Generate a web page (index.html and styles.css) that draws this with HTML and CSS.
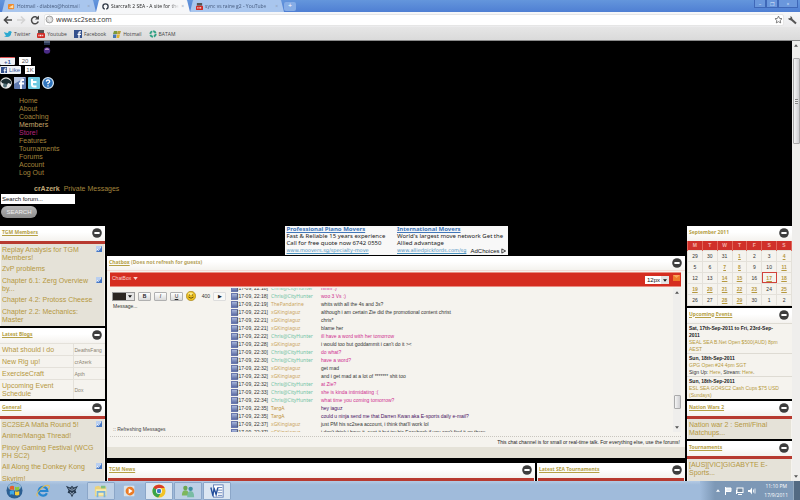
FILE: index.html
```html
<!DOCTYPE html>
<html lang="en">
<head>
<meta charset="utf-8">
<title>Starcraft 2 SEA - A site for the community</title>
<link rel="stylesheet" href="styles.css">
</head>
<body>
<svg class="defs" aria-hidden="true">
  <symbol id="minus" viewBox="0 0 10 10"><circle cx="5" cy="5" r="4.8" fill="#3d3d3d"/><rect x="2.4" y="4" width="5.2" height="2" fill="#fff"/></symbol>
  <symbol id="ext" viewBox="0 0 6 6"><rect width="6" height="6" fill="#b9cff0"/><path d="M0 6L6 0V6z" fill="#4677c4"/><path d="M1 3l1.5 1.5L5 1" stroke="#fff" stroke-width=".8" fill="none"/></symbol>
  <symbol id="yt" viewBox="0 0 8 8"><rect x="1" y="0" width="6" height="3" fill="#555"/><rect x="0" y="3" width="8" height="5" rx="1" fill="#cf2b25"/><path d="M1.5 5.5h5" stroke="#fff" stroke-width="1.4" stroke-dasharray="1 .6"/></symbol>
  <symbol id="fb" viewBox="0 0 8 8"><rect width="8" height="8" fill="#34508c"/><path d="M7 1.8H5.8Q5 1.8 5 2.8V8M3.5 4.3H7" stroke="#fff" stroke-width="1.3" fill="none"/></symbol>
  <symbol id="bird" viewBox="0 0 8 8"><path d="M0 2q2 1 4 1q0-2 2-2q1 0 1.3.8L8 2l-.8 1Q7 7 3 7Q1 7 0 6q1.500 0 2-.6Q.6 4.500 0 2z" fill="#2ba9d0"/></symbol>
  <symbol id="caret" viewBox="0 0 6 4"><path d="M0 0h6L3 4z" fill="currentColor"/></symbol>
</svg>

<div class="tabs">
  <div class="tab"><svg viewBox="0 0 8 8"><rect x="0" y="1" width="7" height="6" rx="1" fill="#ef8a2c"/><path d="M1 5l5-3v4z" fill="#ffe0a8"/></svg><span>Hotmail - diabteo@hotmail</span><i>×</i></div>
  <div class="tab active"><svg viewBox="0 0 8 8"><circle cx="4" cy="4" r="3" fill="none" stroke="#333b48" stroke-width="1.500"/><path d="M4 4v4" stroke="#fff" stroke-width="1.500"/></svg><span>Starcraft 2 SEA - A site for the</span><i>×</i></div>
  <div class="tab"><svg><use href="#yt"/></svg><span>sync vs raine g2 - YouTube</span><i>×</i></div>
  <button class="newtab" aria-label="New tab">+</button>
  <div class="winbtns"><button aria-label="Minimize">–</button><button aria-label="Restore">❐</button><button class="wide" aria-label="Close">×</button></div>
</div>
<div class="toolbar">
  <svg viewBox="0 0 10 10"><path d="M9 5H2M5 1.500L1.500 5L5 8.500" stroke="#4a4a4a" stroke-width="1.600" fill="none"/></svg>
  <svg viewBox="0 0 10 10"><path d="M1 5h7M5 1.500L8.500 5L5 8.500" stroke="#d4d4d4" stroke-width="1.600" fill="none"/></svg>
  <svg viewBox="0 0 10 10"><path d="M8 3.500A3.500 3.500 0 1 0 8.300 6.500" stroke="#4a4a4a" stroke-width="1.500" fill="none"/><path d="M9 .5V4.500H5z" fill="#4a4a4a"/></svg>
  <div class="omnibox">
    <svg viewBox="0 0 10 10"><circle cx="5" cy="5" r="3.800" fill="#ddd" stroke="#999"/><path d="M3 3l2 1 1 3" stroke="#fff" fill="none"/></svg>
    <input type="text" value="www.sc2sea.com" aria-label="Address">
    <svg viewBox="0 0 10 10"><path d="M5 1.200l1.200 2.600 2.700.300-2 1.900.500 2.800L5 7.400 2.600 8.800l.500-2.800-2-1.900 2.700-.300z" stroke="#666" fill="none" stroke-width=".9"/></svg>
  </div>
  <svg viewBox="0 0 10 10"><path d="M4 4l5 4.500" stroke="#555" stroke-width="2"/><path d="M1 3.500Q2 6 5 5Q6 2 3.500 1v2z" fill="#555"/></svg>
</div>
<div class="bookmarks">
  <a href="#"><svg><use href="#bird"/></svg>Twitter</a>
  <a href="#"><svg><use href="#yt"/></svg>Youtube</a>
  <a href="#"><svg><use href="#fb"/></svg>Facebook</a>
  <a href="#"><svg viewBox="0 0 8 8"><path d="M1 1h3v3H0z" fill="#7d9a3c"/><path d="M4.500 1H8L7 4H4z" fill="#b7a23a"/><path d="M0 4.500h3.500L3 8H0z" fill="#4577b5"/><path d="M4 4.500h3L6 8H3.500z" fill="#e3b52f"/></svg>Hotmail</a>
  <a href="#"><svg viewBox="0 0 8 8"><circle cx="4" cy="4" r="2.700" fill="none" stroke="#2fa082" stroke-width="2" stroke-dasharray="3.300 .9"/></svg>BATAM</a>
</div>

<div class="viewport">
<main class="page">
  <header class="top">
    <div class="flags"><svg viewBox="0 0 8 13"><rect x="1" width="6" height="4" fill="#26324f"/><path d="M1 1h6" stroke="#7887a0"/><circle cx="4" cy="9.500" r="3.200" fill="#4a2b86"/><path d="M2 8q2-2 4 0v1H2z" fill="#b48ac2"/></svg></div>
    <div class="social"><button class="plus">+1</button><span class="bubble">20</span></div>
    <div class="social"><button class="like"><svg><use href="#fb"/></svg>Like</button><span class="bubble small">1K</span></div>
    <div class="links">
      <a href="#" aria-label="Steam"><svg viewBox="0 0 12 12"><circle cx="6" cy="6" r="5.800" fill="#e8e8e8"/><path d="M1 4q5-5 10 0v3l-3-1-1 2-5-2z" fill="#1c2e33"/><circle cx="5" cy="8.500" r="2" fill="#527078"/></svg></a>
      <a href="#" aria-label="Facebook"><svg viewBox="0 0 12 12"><rect width="12" height="12" rx="1" fill="#5f7ab0"/><path d="M0 0h12L0 7z" fill="#b6c4e0"/><path d="M10 3H8.500Q7 3 7 4.500V12M5 6.500h5" stroke="#fff" stroke-width="1.800" fill="none"/></svg></a>
      <a href="#" aria-label="Twitter"><svg viewBox="0 0 12 12"><rect width="12" height="12" rx="1" fill="#6fcbe2"/><path d="M4 2v5.500Q4 9.500 6 9.500H8.500M4 5h4.500" stroke="#fff" stroke-width="2" fill="none"/></svg></a>
      <a href="#" aria-label="Help"><svg viewBox="0 0 12 12"><circle cx="6" cy="6" r="5.400" fill="#2f74bd" stroke="#dcebf8" stroke-width="1.200"/><path d="M4.200 4.500Q4.500 3 6 3t1.700 1.500Q7.600 5.500 6 6.300V7.200M6 8.200v1.200" stroke="#fff" stroke-width="1.300" fill="none"/></svg></a>
    </div>
    <nav class="nav">
      <a href="#">Home</a><a href="#">About</a><a href="#">Coaching</a><a href="#" class="light">Members</a><a href="#" class="hot">Store!</a><a href="#">Features</a><a href="#">Tournaments</a><a href="#">Forums</a><a href="#">Account</a><a href="#">Log Out</a>
    </nav>
    <div class="user"><a href="#"><b>crAzerk</b></a><a href="#">Private Messages</a></div>
    <form class="search"><input type="text" value="Search forum..." aria-label="Search forum"><button type="button">SEARCH</button></form>
  </header>

  <div class="columns">
    <aside class="col">
      <section class="panel">
        <div class="head"><a href="#">TGM Members</a><svg><use href="#minus"/></svg></div>
        <ul class="list">
          <li><a href="#">Replay Analysis for TGM Members!</a><svg><use href="#ext"/></svg></li>
          <li><a href="#">ZvP problems</a></li>
          <li><a href="#">Chapter 6.1: Zerg Overview by...</a><svg><use href="#ext"/></svg></li>
          <li><a href="#">Chapter 4.2: Protoss Cheese</a></li>
          <li><a href="#">Chapter 2.2: Mechanics: Master</a></li>
        </ul>
      </section>
      <section class="panel">
        <div class="head"><a href="#">Latest Blogs</a><svg><use href="#minus"/></svg></div>
        <table class="blogs">
          <tr><td><a href="#">What should i do</a></td><td>DeathsFang</td></tr>
          <tr><td><a href="#">New Rig up!</a></td><td>crAzerk</td></tr>
          <tr><td><a href="#">ExerciseCraft</a></td><td>Apth</td></tr>
          <tr><td><a href="#">Upcoming Event Schedule</a></td><td>Dox</td></tr>
        </table>
      </section>
      <section class="panel">
        <div class="head"><a href="#">General</a><svg><use href="#minus"/></svg></div>
        <ul class="list">
          <li><a href="#">SC2SEA Mafia Round 5!</a><svg><use href="#ext"/></svg></li>
          <li><a href="#">Anime/Manga Thread!</a></li>
          <li><a href="#">Pinoy Gaming Festival (WCG PH SC2)</a></li>
          <li><a href="#">All Along the Donkey Kong</a><svg><use href="#ext"/></svg></li>
          <li><a href="#">Skyrim!</a></li>
        </ul>
      </section>
    </aside>

    <div class="center">
      <div class="ad">
        <div><a href="#" class="adtitle">Professional Piano Movers</a><p>Fast &amp; Reliable 15 years experience</p><p>Call for free quote now 6742 0550</p><a href="#" class="url">www.moovers.sg/specialty-move</a></div>
        <div><a href="#" class="adtitle">International Movers</a><p>World's largest move network Get the</p><p>Allied advantage</p><a href="#" class="url">www.alliedpickfords.com/sg</a></div>
        <span class="choices">AdChoices <svg viewBox="0 0 6 6"><path d="M1 .5L5.500 3L1 5.500z" fill="none" stroke="#222"/></svg></span>
      </div>
      <section class="chat">
        <div class="head"><span><a href="#">Chatbox</a> (Does not refresh for guests)</span><svg><use href="#minus"/></svg></div>
        <div class="redbar">
          <span>ChatBox <svg><use href="#caret"/></svg></span>
          <div class="size"><select aria-label="Font size"><option>12px</option></select><svg class="pick"><use href="#caret"/></svg><svg class="env" viewBox="0 0 7 7"><rect width="7" height="6" fill="#ef7a2a"/><path d="M0 0l3.500 3L7 0" fill="#f9a55c"/></svg></div>
        </div>
        <div class="chatbody">
          <div class="composer">
            <div class="tools">
              <span class="colour"><select aria-label="Colour"><option></option></select><svg><use href="#caret"/></svg></span>
              <button><b>B</b></button><button><i>I</i></button><button><u>U</u></button>
              <svg class="smile" viewBox="0 0 10 10"><circle cx="5" cy="5" r="4.700" fill="#e9bd21" stroke="#9d7b14" stroke-width=".6"/><ellipse cx="4.500" cy="2.800" rx="2.500" ry="1.300" fill="#fbe98a"/><path d="M2.500 6q2.500 2.500 5 0M3.500 3.500v1M6.500 3.500v1" stroke="#4c3a05" fill="none" stroke-width=".8"/></svg>
              <span class="count">400</span><button class="send" aria-label="Send">▶</button>
            </div>
            <textarea aria-label="Message">Message...</textarea>
            <div class="status">:: Refreshing Messages</div>
          </div>
          <ol class="log">
            <li class="c"><time>[17-09, 22:18]</time><b>Chris@CityHunter</b><span>hmm :)</span></li>
            <li class="c"><time>[17-09, 22:18]</time><b>Chris@CityHunter</b><span>woo 3 Vs :)</span></li>
            <li><time>[17-09, 22:19]</time><b>ThePandarine</b><span>whits with all the 4s and 3s?</span></li>
            <li><time>[17-09, 22:21]</time><b>xGKingiaguz</b><span>although i am certain Zie did the promotional content christ</span></li>
            <li><time>[17-09, 22:21]</time><b>xGKingiaguz</b><span>chris*</span></li>
            <li><time>[17-09, 22:21]</time><b>xGKingiaguz</b><span>blame her</span></li>
            <li class="c"><time>[17-09, 22:22]</time><b>Chris@CityHunter</b><span>ill have a word with her tomorrow</span></li>
            <li><time>[17-09, 22:28]</time><b>xGKingiaguz</b><span>i would too but goddammit i can't do it &gt;&lt;</span></li>
            <li class="c"><time>[17-09, 22:30]</time><b>Chris@CityHunter</b><span>do what?</span></li>
            <li class="c"><time>[17-09, 22:30]</time><b>Chris@CityHunter</b><span>have a word?</span></li>
            <li><time>[17-09, 22:32]</time><b>xGKingiaguz</b><span>get mad</span></li>
            <li><time>[17-09, 22:32]</time><b>xGKingiaguz</b><span>and i get mad at a lot of ******* shit too</span></li>
            <li class="c"><time>[17-09, 22:32]</time><b>Chris@CityHunter</b><span>at Zie?</span></li>
            <li class="c"><time>[17-09, 22:33]</time><b>Chris@CityHunter</b><span>she is kinda intimidating :(</span></li>
            <li class="c"><time>[17-09, 22:34]</time><b>Chris@CityHunter</b><span>what time you coming tomorrow?</span></li>
            <li class="p"><time>[17-09, 22:35]</time><b>TargA</b><span>hey iaguz</span></li>
            <li class="p"><time>[17-09, 22:35]</time><b>TargA</b><span>could u ninja send me that Darren Kwan aka E-sports daily e-mail?</span></li>
            <li><time>[17-09, 22:37]</time><b>xGKingiaguz</b><span>just PM his sc2sea account, i think that'll work lol</span></li>
            <li><time>[17-09, 22:37]</time><b>xGKingiaguz</b><span>i don't think i have it, sent it but try his Facebook if you can't find it on there</span></li>
          </ol>
          <div class="scroll inner"><svg class="up"><use href="#caret"/></svg><span class="thumb"></span><svg><use href="#caret"/></svg></div>
        </div>
        <p class="note">This chat channel is for small or real-time talk. For everything else, use the forums!</p>
      </section>
      <div class="pair">
        <section class="panel"><div class="head"><a href="#">TGM News</a><svg><use href="#minus"/></svg></div><div class="rule"></div></section>
        <section class="panel"><div class="head"><a href="#">Latest SEA Tournaments</a><svg><use href="#minus"/></svg></div><div class="rule"></div></section>
      </div>
    </div>

    <aside class="col">
      <section class="panel">
        <div class="head plain"><a href="#">September 2011</a><svg><use href="#minus"/></svg></div>
        <table class="cal">
          <tr><th>M</th><th>T</th><th>W</th><th>T</th><th>F</th><th>S</th><th>S</th></tr>
          <tr><td>29</td><td>30</td><td>31</td><td><a href="#">1</a></td><td>2</td><td>3</td><td><a href="#">4</a></td></tr>
          <tr><td>5</td><td>6</td><td><a href="#">7</a></td><td><a href="#">8</a></td><td>9</td><td>10</td><td><a href="#">11</a></td></tr>
          <tr><td>12</td><td>13</td><td><a href="#">14</a></td><td><a href="#">15</a></td><td>16</td><td class="today"><a href="#">17</a></td><td><a href="#">18</a></td></tr>
          <tr><td><a href="#">19</a></td><td><a href="#">20</a></td><td><a href="#">21</a></td><td><a href="#">22</a></td><td><a href="#">23</a></td><td>24</td><td><a href="#">25</a></td></tr>
          <tr><td>26</td><td>27</td><td><a href="#">28</a></td><td><a href="#">29</a></td><td>30</td><td>1</td><td>2</td></tr>
        </table>
      </section>
      <section class="panel">
        <div class="head"><a href="#">Upcoming Events</a><svg><use href="#minus"/></svg></div>
        <ul class="events">
          <li><b>Sat, 17th-Sep-2011 to Fri, 23rd-Sep-<br>2011</b><a href="#">SEAL SEA B.Net Open $500(AUD) 8pm AEST</a></li>
          <li><b>Sun, 18th-Sep-2011</b><a href="#">GPG Open #24 4pm SGT</a><span>Sign Up: <em>Here</em>, Stream: <em>Here</em>.</span></li>
          <li><b>Sun, 18th-Sep-2011</b><a href="#">ESL SEA GO4SC2 Cash Cups $75 USD (Sundays)</a></li>
        </ul>
      </section>
      <section class="panel">
        <div class="head"><a href="#">Nation Wars 2</a><svg><use href="#minus"/></svg></div>
        <ul class="list"><li><a href="#">Nation war 2 : Semi/Final Matchups...</a></li></ul>
      </section>
      <section class="panel">
        <div class="head"><a href="#">Tournaments</a><svg><use href="#minus"/></svg></div>
        <ul class="list last"><li><a href="#">[AUS][VIC]GIGABYTE E-Sports...</a></li></ul>
      </section>
    </aside>
  </div>
</main>
<div class="scroll outer"><svg class="up"><use href="#caret"/></svg><span class="thumb"></span><svg><use href="#caret"/></svg></div>
</div>

<footer class="taskbar">
  <button aria-label="Start"><svg viewBox="0 0 18 18"><circle cx="9" cy="9" r="8.500" fill="#2c5f92"/><ellipse cx="9" cy="5" rx="7" ry="4" fill="#8db6d6"/><path d="M4 5q2-1.500 4.500-.5V8.500Q6 7.500 4 8.500z" fill="#e3602e"/><path d="M9.500 5q2 1 4.500-.3V8.500q-2.500 1-4.500 0z" fill="#8cc63e"/><path d="M4 9.500q2-1 4.500 0v4Q6 12.500 4 13.500z" fill="#3fa9e8"/><path d="M9.500 9.800q2 1 4.500 0v4q-2.500 1-4.500 0z" fill="#f6cc35"/></svg></button>
  <button aria-label="Internet Explorer"><svg viewBox="0 0 16 16"><path d="M12.500 10.500A5 5 0 1 1 13 8H4" stroke="#2786cf" stroke-width="2.500" fill="none"/><path d="M2 14Q-1 12 5 6T15 2Q16 3 14 6" stroke="#e7bd4b" stroke-width="1.200" fill="none"/></svg></button>
  <button aria-label="Starcraft"><svg viewBox="0 0 16 16"><path d="M1 2l5 2 2-2 2 2 5-2-3 5 1 3-3 1-2 4-2-4-3-1 1-3z" fill="#27394e"/><path d="M4 5l3 2M12 5L9 7M6 9l2 3 2-3M8 4v4" stroke="#b5cadf" stroke-width=".9" fill="none"/></svg></button>
  <button class="open" aria-label="Explorer"><svg viewBox="0 0 16 16"><path d="M1 3l4-1 2 1h7v11H1z" fill="#ecd27a"/><path d="M2 6h12v7H2z" fill="#f8ebab"/><path d="M4 15V9h8v6" stroke="#78b2d9" stroke-width="2" fill="none"/><path d="M8 2h5v3H8z" fill="#80bf80"/></svg></button>
  <button aria-label="Media Player"><svg viewBox="0 0 16 16"><rect x="1" y="2" width="12" height="12" rx="1" fill="#d9e2e8"/><circle cx="8" cy="8" r="5" fill="#ec7b25"/><path d="M6.500 5v6l4.500-3z" fill="#fff"/></svg></button>
  <button class="open bright" aria-label="Chrome"><svg viewBox="0 0 16 16"><circle cx="8" cy="8" r="7.500" fill="#f2c327"/><path d="M8 8L1.500 4.500A7.500 7.500 0 0 1 14.500 4.500H8z" fill="#d93b2b"/><path d="M8 8L1.500 4.300A7.500 7.500 0 0 0 7 15.400L11 9z" fill="#3ba349"/><circle cx="8" cy="8" r="3.500" fill="#fff"/><circle cx="8" cy="8" r="2.600" fill="#3c7bc4"/></svg></button>
  <button class="open" aria-label="Messenger"><svg viewBox="0 0 16 16"><circle cx="5" cy="4.500" r="2.500" fill="#6ca850"/><path d="M1 13q0-6 4-6t4 6z" fill="#7db75d"/><circle cx="11" cy="5.500" r="2.500" fill="#3f8fa0"/><path d="M7 15q0-7 4-7t4 7z" fill="#78bca4"/></svg></button>
  <button class="open bright" aria-label="Word"><svg viewBox="0 0 16 16"><rect x="4" y="1" width="11" height="14" fill="#fff" stroke="#5878b4"/><path d="M9 4h5M9 7h5M9 10h5M9 13h5" stroke="#5878b4"/><path d="M1 4l2 8 2-6 2 6 2-8" stroke="#254f9c" stroke-width="1.600" fill="none"/></svg></button>
  <div class="tray">
    <svg class="up"><use href="#caret"/></svg>
    <svg class="ti" viewBox="0 0 8 8"><path d="M1.500 0v8M2 1h5v3.500H2z" stroke="#fff" fill="#e7eef5"/></svg>
    <svg class="ti" viewBox="0 0 8 8"><rect x="1" y="1" width="6" height="4.500" fill="#72889f" stroke="#fff"/><path d="M2 7.500h4M.5 3v4" stroke="#fff"/></svg>
    <svg class="ti" viewBox="0 0 8 8"><path d="M0 3h2l2-2.500v7L2 5H0z" fill="#fff"/><path d="M5.500 2.500v3M7 1.500v5" stroke="#fff" stroke-width=".8"/></svg>
    <div class="clock">11:10 PM<br>17/9/2011</div>
    <button class="desk" aria-label="Show desktop"></button>
  </div>
</footer>
</body>
</html>
```
FILE: styles.css
```css
* { box-sizing: border-box; }
body, p, ul, ol { margin: 0; padding: 0; }
ul, ol { list-style: none; }
body { height: 100vh; display: flex; flex-direction: column; overflow: hidden; background: #000; font: 5px/8px "Liberation Sans", Arial, sans-serif; color: #333; }
a { color: #b5983f; text-decoration: none; }
button, input, select, textarea { font: inherit; color: inherit; margin: 0; padding: 0; border: 0; background: none; border-radius: 0; appearance: none; }
svg { flex: none; display: block; }
.defs { width: 0; height: 0; position: absolute; }

/* browser frame */
.tabs, .toolbar, .bookmarks, .taskbar { flex: none; display: flex; align-items: center; font-family: "Open Sans", sans-serif; }
.tabs { height: 12px; padding-left: 2px; background: linear-gradient(#6496dc, #4f7fd3); }
.tab { flex: 0 1 94px; min-width: 0; height: 12px; display: flex; align-items: center; gap: 2px; padding: 0 6px; background: #a9c6ee; border-radius: 4px 4px 0 0; color: #44597c; clip-path: polygon(3px 0, 91px 0, 100% 100%, 0 100%); }
.tab.active { background: #f6f7f9; color: #222; }
.tab span { flex: 1; min-width: 0; overflow: hidden; white-space: nowrap; mask-image: linear-gradient(to right, #000 85%, transparent); }
.tab svg { width: 7px; height: 7px; }
.tab i { font-style: normal; color: #8f9db3; }
.newtab { width: 12px; height: 9px; background: #86ade6; color: #fff; border-radius: 2px; line-height: 8px; font-size: 7px; }
.winbtns { margin: 0 2px 4px auto; display: flex; }
.winbtns button { width: 12px; height: 8px; border: 1px solid #3f68b8; border-top: 0; color: #dfe9fa; background: #6a97dc; line-height: 6px; }
.winbtns .wide { width: 20px; }
.toolbar { height: 15px; background: linear-gradient(#f6f7f9, #ebebec); padding: 0 3px; gap: 3px; }
.toolbar > svg { width: 10px; height: 10px; }
.omnibox { flex: 1; height: 12px; display: flex; align-items: center; gap: 2px; background: #fff; border: 1px solid #e6e6e6; border-radius: 2px; }
.omnibox svg { width: 9px; height: 9px; }
.omnibox input { flex: 1; font-size: 7px; color: #333; }
.toolbar > svg:nth-child(3) { margin: 0 1px; }
.bookmarks { height: 14px; background: linear-gradient(#e6e6e6, #dadada); border-bottom: 1px solid #8a8a8a; padding: 0 4px; gap: 7px; }
.bookmarks a { display: flex; align-items: center; gap: 2px; color: #444; }
.bookmarks svg { width: 8px; height: 8px; }

.viewport { flex: 1; min-height: 0; display: flex; }
.page { flex: 1; min-width: 0; overflow: hidden; }

/* site header */
.top { height: 185px; }
.flags { height: 16px; padding-left: 43px; }
.flags svg { width: 8px; height: 13px; }
.social { display: flex; gap: 4px; height: 9px; align-items: flex-start; }
.social button { height: 8px; background: #eef1f6; border-radius: 1px; color: #3a5a9c; font-size: 6px; display: flex; align-items: center; justify-content: center; gap: 2px; }
.social .plus { width: 15px; font-weight: bold; border-top: 1px solid #d55; }
.like { width: 21px; }
.like svg { width: 6px; height: 6px; }
.bubble { width: 12px; height: 8px; background: #fff; text-align: center; font-size: 6px; color: #555; }
.bubble.small { width: 10px; }
.links { display: flex; gap: 2px; margin: 2px 0 8px; }
.links svg { width: 12px; height: 12px; }
.nav { display: flex; flex-direction: column; padding-left: 19px; font-size: 7px; }
.nav a, .user a { color: #a3843c; }
.nav .light { color: #c4a66a; }
.nav .hot { color: #b8247c; }
.user { display: flex; gap: 4px; padding: 8px 0 1px 34px; font-size: 7px; }
.user b { color: #c0a878; }
.search { padding-left: 1px; display: flex; flex-direction: column; align-items: flex-start; gap: 2px; }
.search input { width: 74px; height: 10px; background: #fff; padding-left: 1px; font-size: 6px; color: #111; }
.search button { width: 36px; height: 12px; border-radius: 6px; background: linear-gradient(#b5b5b5, #8d8d8d); color: #eee; font-size: 6px; }

/* columns */
.columns { display: grid; grid-template-columns: 105px minmax(0, 1fr) 105px; gap: 2px; align-items: start; }
.col { display: flex; flex-direction: column; gap: 2px; }
.panel, .chat { background: #f5f3ee; }
.head { height: 15px; display: flex; align-items: center; justify-content: space-between; padding: 0 3px 3px 2px; background: linear-gradient(#fff 40%, #f4f2ee); font-family: "Noto Sans", sans-serif; font-weight: bold; color: #b5a25a; }
.head a { text-decoration: underline; color: #b5a044; }
.head.plain a { text-decoration: none; }
.head svg { width: 10px; height: 10px; margin-top: 2px; }
.list { margin: 0; border-top: 3px solid #b73a30; background: #e5e2d8; font-size: 7px; box-shadow: inset 1px 0 #f5f3ee, inset -1px 0 #f5f3ee; }
.list li { display: flex; justify-content: space-between; padding: 2px 3px 2px 2px; }
.list li:nth-child(even) { padding-top: 1px; }
.list.last { padding-bottom: 20px; }
.list a { flex: 0 1 94px; }
.list svg { width: 6px; height: 6px; }
.blogs { width: 100%; border-collapse: collapse; font-size: 7px; }
.blogs td { height: 12px; padding: 2px 0 1px 2px; border-top: 1px solid #e4e1da; }
.blogs td + td { width: 32px; font-size: 5px; color: #8b8371; padding-left: 1px; border-left: 1px solid #e4e1da; }

.center { display: flex; flex-direction: column; }
.ad { align-self: center; width: 223px; height: 29px; margin-bottom: 1px; padding: 0 0 1px 2px; background: #f8f8f8; display: grid; grid-template-columns: 1fr 1fr; font: 6px/7px "Noto Sans", sans-serif; color: #222; position: relative; white-space: nowrap; }
.ad > div { display: flex; flex-direction: column; }
.adtitle { font-weight: bold; color: #4076b8; text-decoration: underline; }
.url { color: #4c93bf; text-decoration: underline; font: 5px/7px "DejaVu Sans", sans-serif; }
.choices { position: absolute; right: 2px; bottom: 1px; display: flex; align-items: center; gap: 1px; background: #f8f8f8; font: 6px/6px "Liberation Sans", sans-serif; color: #111; }
.choices svg { width: 5px; height: 6px; }

.chat { border-bottom: 11px solid #e5e2d8; }
.chat .head { border-bottom: 1px solid #f1dcd6; padding-bottom: 2px; }
.redbar { height: 15px; margin: 1px 4px 0 3px; background: #d52d20; border: 1px solid #e98b80; border-width: 1px 0; color: #fbd5d0; display: flex; justify-content: space-between; align-items: center; }
.redbar span { display: flex; align-items: center; gap: 2px; padding: 0 0 3px 2px; }
.redbar svg { width: 5px; height: 3px; }
.size { display: flex; align-items: center; }
.size select { width: 16px; height: 8px; background: #fff; color: #111; font-size: 6px; padding-left: 2px; }
.redbar .pick { width: 8px; height: 8px; padding: 3px 2px 2px; background: #e4e4e4; color: #111; }
.redbar .env { width: 7px; height: 7px; margin: 0 1px 2px 4px; }
.chatbody { display: flex; margin: 1px 4px 0 3px; height: 149px; border-bottom: 1px dotted #c9c6bf; }
.composer { flex: none; width: 120px; padding: 3px 4px 3px 2px; display: flex; flex-direction: column; }
.tools { display: flex; gap: 3px; align-items: center; height: 10px; }
.tools button { width: 13px; height: 9px; border: 1px solid #b0b0b0; border-radius: 1px; background: linear-gradient(#fff, #d9d9d9); color: #222; line-height: 7px; }
.colour { display: flex; width: 23px; height: 9px; border: 1px solid #999; background: #2b2622; }
.colour select { flex: 1; min-width: 0; }
.colour svg { width: 8px; padding: 2px; height: 7px; background: #e4e4e4; color: #111; }
.smile { width: 10px; height: 10px; }
.count { flex: 1; text-align: right; }
.tools .send { background: #f8f8f6; border-color: #ddd; line-height: 6px; }
.composer textarea { flex: 1; resize: none; padding: 1px; color: #333; }
.status { color: #444; padding-left: 1px; }
.log { flex: 1; min-width: 0; height: 144px; overflow: hidden; display: flex; flex-direction: column; justify-content: center; white-space: nowrap; }
.log li { flex: none; height: 8px; display: grid; grid-template-columns: 7px 34px 50px 1fr; align-items: center; }
.log li::before { content: ""; width: 5px; height: 5px; background: linear-gradient(#a8b6dc, #5c6ca6); border: 1px solid #6a78ae; margin-left: 1px; }
.log b { font-family: "Noto Sans", sans-serif; font-weight: normal; color: #cba660; }
.log .c b { color: #73c4a6; }
.log .c span { color: #cf2f90; }
.log .p span { color: #46105f; }
.log .p b { color: #bd9137; }
.note { text-align: right; padding: 1px 5px 0 0; color: #222; height: 10px; }
.pair { display: grid; grid-template-columns: 428fr 148fr; gap: 2px; margin-top: 5px; }
.rule { height: 8px; margin: 0 1px; background: #b73a30; }

.scroll { flex: none; width: 8px; display: flex; flex-direction: column; align-items: center; background: #efeeec; color: #555; }
.scroll svg, .tray .up { width: 4px; height: 3px; margin: 3px 0; }
.up { transform: rotate(180deg); }
.scroll .thumb { width: 7px; border: 1px solid #aaa; border-radius: 1px; background: linear-gradient(to right, #f4f4f4, #cfcfd2); }
.scroll svg:last-child { margin-top: auto; }
.inner { height: 144px; }
.inner .thumb { height: 14px; margin-top: 98px; }
.outer .thumb { height: 86px; margin-top: 8px; background: repeating-linear-gradient(#888 0 1px, #eee 1px 2px) center / 3px 5px no-repeat, linear-gradient(to right, #f4f4f4, #cfcfd2); }

.cal { width: 100%; border-collapse: collapse; table-layout: fixed; text-align: center; }
.cal th { height: 9px; padding: 0; background: #d0302a; color: #f2b0a8; border: 1px solid #e0675c; border-width: 0 1px; }
.cal td { height: 11px; padding: 0; border: 1px solid #e4e1da; }
.cal td a { font-weight: bold; text-decoration: underline; }
.cal .today { outline: 1px solid #d2423c; outline-offset: -1px; }
.events li { padding: 1px 2px 0; border-top: 1px solid #dedbd3; line-height: 7px; display: flex; flex-direction: column; }
.events a, .events em { color: #b59a3c; font-style: normal; }
.events b { color: #222; }

.taskbar { height: 19px; background: linear-gradient(#b4cae4, #a0bbdb 20%); gap: 1px; }
.taskbar button { width: 28px; height: 18px; display: grid; place-items: center; }
.taskbar button svg { width: 14px; height: 14px; }
.taskbar button:first-child svg { width: 17px; height: 17px; }
.taskbar .open { background: #bdd0e6; border: 1px solid #8ba6c8; border-radius: 1px; }
.taskbar .bright { background: #dbe6f2; }
.tray { margin-left: auto; align-self: stretch; display: flex; align-items: center; gap: 4px; padding-left: 16px; background: linear-gradient(to right, #a0bbdb, #7d98b6 15px); color: #fff; }
.ti { width: 8px; height: 8px; }
.clock { line-height: 9px; text-align: center; padding: 0 1px 0 4px; }
.taskbar .desk { width: 7px; height: 19px; background: #536a82; border-left: 1px solid #93a9bf; }
```
